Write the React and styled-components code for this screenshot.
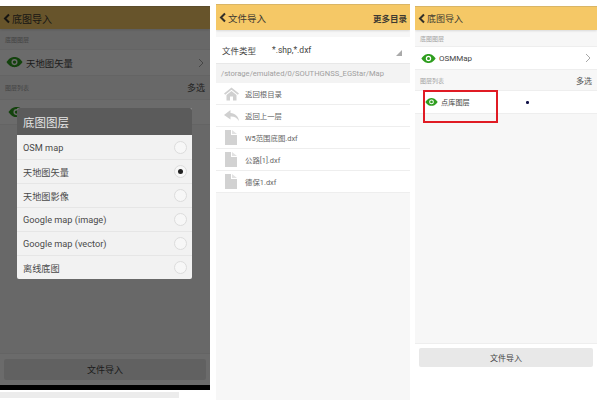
import React from 'react';
import styled, { createGlobalStyle } from 'styled-components';

const GlobalStyle = createGlobalStyle`
  html, body {
    margin: 0;
    padding: 0;
    background: #fff;
    font-family: Roboto, "Noto Sans CJK SC", sans-serif;
  }
`;

const Page = styled.div`
  width: 600px;
  height: 400px;
  overflow: hidden;
  display: flex;
  align-items: flex-start;
  background: #fff;
`;

const LeftColumn = styled.div`
  width: 210px;
  flex: none;
  padding-top: 6px;
`;

const Phone = styled.div`
  position: relative;
  display: flex;
  flex-direction: column;
  flex: none;
  width: ${props => props.width}px;
  height: ${props => props.height}px;
  margin-top: ${props => props.top || 0}px;
  margin-left: ${props => props.left || 0}px;
  background: #f7f7f7;
  overflow: hidden;
`;

const Header = styled.div`
  height: ${props => props.height}px;
  flex: none;
  display: flex;
  align-items: center;
  justify-content: space-between;
  padding: 0 3px 0 3px;
  background: #f5c866;
  border-top: 1px solid #d9b566;
  box-sizing: border-box;
  box-shadow: 0 1px 2px rgba(0, 0, 0, 0.12);
  color: #3d3a32;
  font-size: ${props => props.font}px;
`;

const HeaderTitle = styled.div`
  display: flex;
  align-items: center;
  gap: 1px;
`;

const HeaderAction = styled.span`
  font-size: 8.5px;
  font-weight: 700;
`;

const SectionLabel = styled.div`
  height: ${props => props.height}px;
  flex: none;
  display: flex;
  align-items: center;
  justify-content: space-between;
  padding: 0 5px;
  font-size: 6px;
  color: #a3a3a3;
`;

const MultiSelect = styled.span`
  font-size: ${props => props.size || 9}px;
  color: #555;
`;

const LayerRow = styled.div`
  position: relative;
  height: ${props => props.height}px;
  flex: none;
  display: flex;
  align-items: center;
  gap: 3px;
  padding-left: ${props => props.indent || 6}px;
  padding-right: 6px;
  background: #fff;
  border-top: 1px solid #eee;
  border-bottom: 1px solid #eee;
  box-sizing: border-box;
  font-size: ${props => props.font}px;
  color: #444;
`;

const RowChevron = styled.svg`
  margin-left: auto;
`;

const Dot = styled.span`
  position: absolute;
  left: 111px;
  top: 10px;
  width: 2.5px;
  height: 2.5px;
  background: #111148;
  border-radius: 50%;
`;

const Spacer = styled.div`
  flex: 1;
`;

const Footer = styled.div`
  flex: none;
  height: ${props => props.height}px;
  padding: ${props => props.pad};
  border-top: 1px solid #eee;
  box-sizing: border-box;
  background: #fff;
`;

const ImportButton = styled.div`
  height: 100%;
  display: flex;
  align-items: center;
  justify-content: center;
  background: #e8e8e8;
  border-radius: 2px;
  font-size: ${props => props.font}px;
  color: #444;
`;

const Scrim = styled.div`
  position: absolute;
  inset: 0;
  background: rgba(0, 0, 0, 0.58);
`;

const Dialog = styled.div`
  position: absolute;
  left: 17px;
  top: 102px;
  width: 175px;
  border-radius: 2px;
  overflow: hidden;
  background: #f2f2f2;
`;

const DialogTitle = styled.div`
  height: 27px;
  display: flex;
  align-items: center;
  padding-left: 6px;
  background: #5b5b5b;
  color: #e6e6e6;
  font-size: 11.5px;
`;

const DialogItem = styled.div`
  height: 24px;
  box-sizing: border-box;
  display: flex;
  align-items: center;
  justify-content: space-between;
  padding: 0 5px 0 6px;
  font-size: 9.2px;
  color: #4a4a4a;
  & + & {
    border-top: 1px solid #e6e6e6;
  }
`;

const Radio = styled.span`
  width: 11px;
  height: 11px;
  border-radius: 50%;
  border: 1px solid #dcdcdc;
  background: #f7f7f7;
  display: flex;
  align-items: center;
  justify-content: center;
  &::after {
    content: '';
    display: ${props => props.checked ? 'block' : 'none'};
    width: 5px;
    height: 5px;
    border-radius: 50%;
    background: #222;
  }
`;

const BottomBar = styled.div`
  height: 5px;
  background: #000;
  margin-top: -5px;
  position: relative;
`;

const BottomStrip = styled.div`
  width: 179px;
  height: 6px;
  margin-top: 2px;
  background: #ececec;
`;

const TypeRow = styled.div`
  height: 26px;
  flex: none;
  margin-top: 7px;
  display: flex;
  align-items: center;
  padding: 0 8px 0 6px;
  background: #fff;
  font-size: 8.5px;
  color: #444;
`;

const TypeValue = styled.span`
  margin-left: 16px;
`;

const TypeCorner = styled.span`
  margin-left: auto;
  width: 0;
  height: 0;
  border-left: 6px solid transparent;
  border-bottom: 6px solid #aaa;
  margin-top: 6px;
`;

const PathRow = styled.div`
  height: 20px;
  flex: none;
  box-sizing: border-box;
  display: flex;
  align-items: center;
  padding-left: 5px;
  background: #f3f3f3;
  border-top: 1px solid #e8e8e8;
  font-size: 7.6px;
  color: #a0a0a0;
`;

const FileRow = styled.div`
  height: 22px;
  flex: none;
  box-sizing: border-box;
  display: flex;
  align-items: center;
  gap: 6px;
  padding-left: 7px;
  background: #fff;
  border-bottom: 1px solid #eee;
  font-size: 7.4px;
  color: #666;
`;

const IconSlot = styled.span`
  width: 16px;
  display: flex;
  justify-content: center;
  flex: none;
`;

const Callout = styled.div`
  position: absolute;
  left: 8px;
  top: 84px;
  width: 75px;
  height: 33px;
  box-sizing: border-box;
  border: 2px solid #e01b24;
`;

const Back = () => (
  <svg width="8" height="11" viewBox="0 0 8 11">
    <path d="M6 1.5 L2 5.5 L6 9.5" fill="none" stroke="#33302a" strokeWidth="2" />
  </svg>
);

const Eye = ({ size = 17, color = '#2f9e1f' }) => (
  <svg width={size} height={size * 0.6} viewBox="0 0 20 12">
    <path d="M0.5 6 C4 1 7 0 10 0 C13 0 16 1 19.5 6 C16 11 13 12 10 12 C7 12 4 11 0.5 6 Z" fill={color} />
    <circle cx="10" cy="6" r="3.6" fill="#fff" />
    <circle cx="10" cy="6" r="2" fill={color} />
  </svg>
);

const Chevron = () => (
  <RowChevron width="6" height="10" viewBox="0 0 6 10">
    <path d="M1 1 L5 5 L1 9" fill="none" stroke="#a8a8a8" strokeWidth="1" />
  </RowChevron>
);

const HomeIcon = () => (
  <svg width="15" height="14" viewBox="0 0 15 14">
    <path d="M7.5 0.5 L15 6.5 L13.8 7.8 L7.5 2.8 L1.2 7.8 L0 6.5 Z" fill="#d0d0d0" />
    <path d="M2.5 8 L7.5 4 L12.5 8 V13.5 H9 V9.5 H6 V13.5 H2.5 Z" fill="#d0d0d0" />
  </svg>
);

const ReplyIcon = () => (
  <svg width="15" height="11" viewBox="0 0 15 11">
    <path d="M6.5 0 L0 5 L6.5 9.5 V6.6 C10 6.4 12.8 7.6 15 11 C14.4 6.4 11.2 3.4 6.5 3 Z" fill="#d0d0d0" />
  </svg>
);

const FileIcon = () => (
  <svg width="12" height="15" viewBox="0 0 12 15">
    <path d="M0 0 H6 V5 H12 V15 H0 Z" fill="#d2d2d2" />
    <path d="M7 0 L12 4 H7 Z" fill="#e2e2e2" />
  </svg>
);

const baseLayers = ['OSM map', '天地图矢量', '天地图影像', 'Google map (image)', 'Google map (vector)', '离线底图'];

const files = [
  { icon: <HomeIcon />, name: '返回根目录' },
  { icon: <ReplyIcon />, name: '返回上一层' },
  { icon: <FileIcon />, name: 'W5范围底图.dxf' },
  { icon: <FileIcon />, name: '公路[1].dxf' },
  { icon: <FileIcon />, name: '德保1.dxf' },
];

export default function App() {
  return (
    <Page>
      <GlobalStyle />
      <LeftColumn>
        <Phone width={210} height={384}>
          <Header height={23} font={10}>
            <HeaderTitle><Back />底图导入</HeaderTitle>
          </Header>
          <SectionLabel height={20}>底图图层</SectionLabel>
          <LayerRow height={27} font={9.4}><Eye />天地图矢量<Chevron /></LayerRow>
          <SectionLabel height={23}>图层列表<MultiSelect>多选</MultiSelect></SectionLabel>
          <LayerRow height={26} font={9.4} indent={8}><Eye /></LayerRow>
          <Spacer />
          <Footer height={37} pad="5px 4px 10px">
            <ImportButton font={9}>文件导入</ImportButton>
          </Footer>
          <Scrim />
          <Dialog>
            <DialogTitle>底图图层</DialogTitle>
            {baseLayers.map((name, i) => (
              <DialogItem key={name}>{name}<Radio checked={i === 1} /></DialogItem>
            ))}
          </Dialog>
        </Phone>
        <BottomBar />
        <BottomStrip />
      </LeftColumn>

      <Phone width={194} height={396} top={4} left={6}>
        <Header height={26} font={9.5}>
          <HeaderTitle><Back />文件导入</HeaderTitle>
          <HeaderAction>更多目录</HeaderAction>
        </Header>
        <TypeRow>文件类型<TypeValue>*.shp,*.dxf</TypeValue><TypeCorner /></TypeRow>
        <PathRow>/storage/emulated/0/SOUTHGNSS_EGStar/Map</PathRow>
        {files.map(file => (
          <FileRow key={file.name}><IconSlot>{file.icon}</IconSlot>{file.name}</FileRow>
        ))}
      </Phone>

      <Phone width={182} height={362} top={6} left={5}>
        <Header height={24} font={9}>
          <HeaderTitle><Back />底图导入</HeaderTitle>
        </Header>
        <SectionLabel height={16}>底图图层</SectionLabel>
        <LayerRow height={24} font={8}><Eye size={15} />OSMMap<Chevron /></LayerRow>
        <SectionLabel height={20}>图层列表<MultiSelect size={8}>多选</MultiSelect></SectionLabel>
        <LayerRow height={24} font={7.2} indent={10}><Eye size={13} />点库图层<Dot /></LayerRow>
        <Spacer />
        <Footer height={25} pad="4px 4px 1px">
          <ImportButton font={8}>文件导入</ImportButton>
        </Footer>
        <Callout />
      </Phone>
    </Page>
  );
}
